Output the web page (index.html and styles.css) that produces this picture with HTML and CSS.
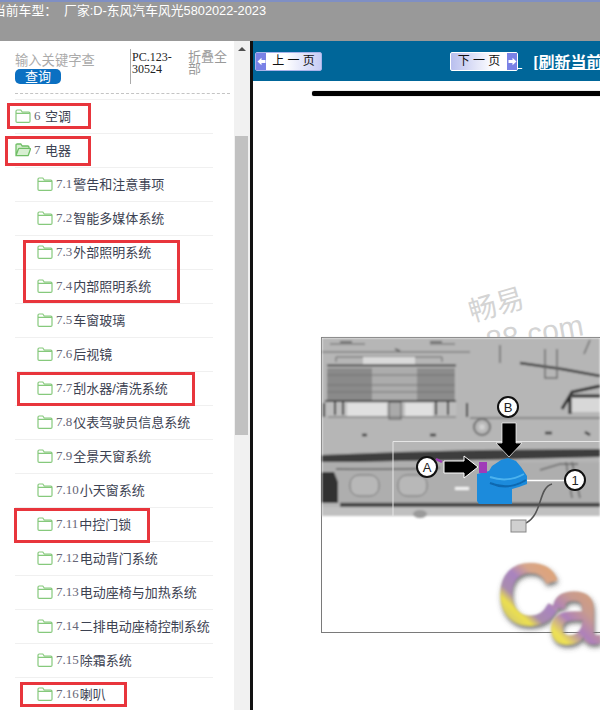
FILE: index.html
```html
<!DOCTYPE html>
<html lang="zh-CN">
<head>
    <meta charset="UTF-8">
    <title>维修手册</title>
    <link rel="stylesheet" href="styles.css">
</head>
<body>
    <svg class="defs">
        <symbol id="folder" viewBox="0 0 16 14">
            <path d="M1 12.2V2.2q0-1.2 1.2-1.2h3.6l1.4 2h6.6q1.2 0 1.2 1.2v8q0 1.2-1.2 1.2H2.2Q1 13.4 1 12.2zM1 4.4h14" fill="none" stroke="#86c97c" stroke-width="1.2"/>
        </symbol>
        <symbol id="folder-open" viewBox="0 0 16 14">
            <path d="M1 12.6V2.2q0-1.2 1.2-1.2h3.6l1.4 2h5.6q1.2 0 1.2 1.2v1.6M1 12.6l2.4-6.6q.2-.6 1-.6h10.4q.9 0 .6.9l-2 5.7q-.2.7-1 .7H1z" fill="#d8efd2" stroke="#6fbe65" stroke-width="1.3"/>
        </symbol>
    </svg>

    <header class="topbar">
        <div class="topbar-text">当前车型：&nbsp;&nbsp;厂家:D-东风汽车风光5802022-2023</div>
    </header>

    <div class="main">
        <aside class="side">
            <div class="side-inner">
                <div class="search">
                    <div class="search-box">
                        <div class="search-hint">输入关键字查</div>
                        <span class="search-btn">查询</span>
                    </div>
                    <div class="search-code">PC.123-30524</div>
                    <div class="search-fold">折叠全部</div>
                </div>
                <ul class="tree">
                    <li class="row"><svg class="ico"><use href="#folder"/></svg><span class="num">6</span>&nbsp;空调</li>
                    <li class="row"><svg class="ico"><use href="#folder-open"/></svg><span class="num">7</span>&nbsp;电器</li>
                    <li class="row sub"><svg class="ico"><use href="#folder"/></svg><span class="num">7.1</span>警告和注意事项</li>
                    <li class="row sub"><svg class="ico"><use href="#folder"/></svg><span class="num">7.2</span>智能多媒体系统</li>
                    <li class="row sub"><svg class="ico"><use href="#folder"/></svg><span class="num">7.3</span>外部照明系统</li>
                    <li class="row sub"><svg class="ico"><use href="#folder"/></svg><span class="num">7.4</span>内部照明系统</li>
                    <li class="row sub"><svg class="ico"><use href="#folder"/></svg><span class="num">7.5</span>车窗玻璃</li>
                    <li class="row sub"><svg class="ico"><use href="#folder"/></svg><span class="num">7.6</span>后视镜</li>
                    <li class="row sub"><svg class="ico"><use href="#folder"/></svg><span class="num">7.7</span>刮水器/清洗系统</li>
                    <li class="row sub"><svg class="ico"><use href="#folder"/></svg><span class="num">7.8</span>仪表驾驶员信息系统</li>
                    <li class="row sub"><svg class="ico"><use href="#folder"/></svg><span class="num">7.9</span>全景天窗系统</li>
                    <li class="row sub"><svg class="ico"><use href="#folder"/></svg><span class="num">7.10</span>小天窗系统</li>
                    <li class="row sub"><svg class="ico"><use href="#folder"/></svg><span class="num">7.11</span>中控门锁</li>
                    <li class="row sub"><svg class="ico"><use href="#folder"/></svg><span class="num">7.12</span>电动背门系统</li>
                    <li class="row sub"><svg class="ico"><use href="#folder"/></svg><span class="num">7.13</span>电动座椅与加热系统</li>
                    <li class="row sub"><svg class="ico"><use href="#folder"/></svg><span class="num">7.14</span>二排电动座椅控制系统</li>
                    <li class="row sub"><svg class="ico"><use href="#folder"/></svg><span class="num">7.15</span>除霜系统</li>
                    <li class="row sub"><svg class="ico"><use href="#folder"/></svg><span class="num">7.16</span>喇叭</li>
                </ul>
                <!-- red marks drawn over the tree -->
                <div class="mark mark-1"></div>
                <div class="mark mark-2"></div>
                <div class="mark mark-3"></div>
                <div class="mark mark-4"></div>
                <div class="mark mark-5"></div>
                <div class="mark mark-6"></div>
            </div>
            <div class="scrollbar">
                <div class="scroll-up"></div>
                <div class="scroll-thumb"></div>
            </div>
        </aside>

        <section class="content">
            <div class="navbar">
                <a class="page-btn page-prev">
                    <span class="cap"><svg class="cap-arrow" viewBox="0 0 9 9"><path d="M0.500 4.500L4.500 0.800V3H8.500V6H4.500V8.200z"/></svg></span>
                    <span class="page-label">上 一 页</span>
                </a>
                <a class="page-btn page-next">
                    <span class="page-label">下 一 页</span>
                    <span class="cap"><svg class="cap-arrow" viewBox="0 0 9 9"><path d="M8.500 4.500L4.500 0.800V3H0.500V6H4.500V8.200z"/></svg></span>
                </a>
                <a class="link-gap">&nbsp;</a>
                <a class="refresh">[刷新当前页面]</a>
            </div>
            <div class="rule"></div>
            <!-- viewBox uses page coordinates -->
            <svg class="figure" viewBox="253 100 347 610">
                <defs>
                    <filter id="soft" x="-5%" y="-5%" width="110%" height="110%"><feGaussianBlur stdDeviation="0.8"/></filter>
                    <filter id="slight"><feGaussianBlur stdDeviation="0.6"/></filter>
                    <filter id="logo-blur" x="-20%" y="-20%" width="150%" height="150%">
                        <feGaussianBlur stdDeviation="1.2" result="b"/>
                        <feDropShadow in="b" dx="1" dy="3" stdDeviation="2.5" flood-color="#444" flood-opacity="0.8"/>
                    </filter>
                    <linearGradient id="logo-c" x1="0.8" y1="0" x2="0.2" y2="1">
                        <stop offset="0" stop-color="#e7a468"/>
                        <stop offset="0.3" stop-color="#d7a58a"/>
                        <stop offset="0.45" stop-color="#a983bf"/>
                        <stop offset="0.62" stop-color="#a98cae"/>
                        <stop offset="0.72" stop-color="#ece04f"/>
                        <stop offset="0.88" stop-color="#cfc572"/>
                        <stop offset="1" stop-color="#a8a07a"/>
                    </linearGradient>
                    <linearGradient id="logo-a" x1="0.7" y1="0" x2="0.2" y2="1">
                        <stop offset="0" stop-color="#dfa36a"/>
                        <stop offset="0.4" stop-color="#c79a90"/>
                        <stop offset="0.6" stop-color="#ad80bb"/>
                        <stop offset="0.8" stop-color="#eee255"/>
                        <stop offset="1" stop-color="#cfc068"/>
                    </linearGradient>
                </defs>

                <g class="wm">
                    <text x="472" y="322" font-size="28" transform="rotate(-16 472 322)">畅易</text>
                    <text x="488" y="352" font-size="30" transform="rotate(-10 488 352)">88.com</text>
                </g>

                <rect x="321.500" y="337.500" width="290" height="295" fill="#fff" stroke="#7a7a7a"/>

                <g filter="url(#soft)">
                    <rect x="322" y="338" width="278" height="178" fill="#b6b6b6"/>
                    <!-- top strip -->
                    <path d="M330 344h35M430 344h25M322 352H470" stroke="#8c8c8c" stroke-width="2" fill="none"/>
                    <path d="M340 342h12M430 342h12M395 349l5 2" stroke="#555" stroke-width="1.500" fill="none"/>
                    <path d="M520 363Q560 368 600 376" stroke="#3c3c3c" stroke-width="2.500" fill="none"/>
                    <path d="M500 345v18M545 349v29h12v-29M590 340l-6 14" stroke="#6c6c6c" stroke-width="1.500" fill="none"/>
                    <!-- radiator block -->
                    <path d="M336 362v-5h106v5" fill="none" stroke="#666"/>
                    <rect x="363" y="357" width="52" height="7" fill="#dadada"/>
                    <rect x="327" y="366" width="129" height="50" fill="#bdbdbd"/>
                    <path d="M327 365.500H456" stroke="#444" stroke-width="2"/>
                    <rect x="327" y="368" width="45" height="33" fill="#8a8a8a"/>
                    <rect x="372" y="368" width="45" height="33" fill="#acacac"/>
                    <rect x="417" y="368" width="38" height="33" fill="#8c8c8c"/>
                    <path d="M327 375H455M327 385H455M327 392H455" stroke="#707070" stroke-width="0.900"/>
                    <path d="M325 401H456" stroke="#444" stroke-width="2"/>
                    <rect x="347" y="403" width="40" height="13" fill="#e0e0e0"/>
                    <rect x="405" y="403" width="28" height="13" fill="#e0e0e0"/>
                    <rect x="389" y="402" width="12" height="17" fill="#aaa" stroke="#555"/>
                    <path d="M335 402v13M343 402v13M436 402v13M448 402v13M324 403v14M467 403v14" stroke="#333" stroke-width="2"/>
                    <path d="M328 417H456" stroke="#707070"/>
                    <!-- mid panel -->
                    <circle cx="482" cy="427" r="8" fill="#b8b8b8" stroke="#6c6c6c" stroke-width="2"/>
                    <circle cx="482" cy="427" r="3" fill="#d0d0d0"/>
                    <path d="M362 435h5M430 435h6M545 433h7M585 432l5 3" stroke="#333" stroke-width="2.500"/>
                    <path d="M570 398h30v14h-30z" fill="#d8d8d8"/>
                    <path d="M562 409L572 392L600 386M570 414V396M600 396H572" stroke="#2c2c2c" stroke-width="3" fill="none"/>
                    <path d="M470 418H600" stroke="#777" stroke-width="1.500"/>
                    <!-- dark rail -->
                    <path d="M322 455L400 452L480 450L600 449V457L480 460L400 461L322 463z" fill="#3e3e3e"/>
                    <!-- lower panel -->
                    <rect x="322" y="462" width="278" height="40" fill="#aeaeae"/>
                    <path d="M336 469Q390 470 440 468" stroke="#5c5c5c" stroke-width="1.500" fill="none"/>
                    <path d="M322 472h12l4 10v21h-16z" fill="#333"/>
                    <rect x="350" y="475" width="29" height="21" rx="9" fill="#b8b8b8" stroke="#747474"/>
                    <rect x="398" y="475" width="29" height="21" rx="9" fill="#b8b8b8" stroke="#747474"/>
                    <rect x="455" y="487" width="14" height="3" fill="#f4f4f4"/>
                    <path d="M540 470l20-6 18 0M566 462l6 36M572 462l8 36" stroke="#666" stroke-width="1.500" fill="none"/>
                    <path d="M340 505H600" stroke="#444" stroke-width="4.500"/>
                    <rect x="322" y="507" width="278" height="9" fill="#c0c0c0"/>
                    <ellipse cx="420" cy="514" rx="7" ry="4" fill="#9a9a9a"/>
                </g>

                <!-- thin frame around the detail -->
                <path d="M393 516V441.500H600" fill="none" stroke="#e6e6e6" stroke-width="1"/>

                <!-- horn -->
                <g filter="url(#slight)">
                    <path d="M552 484C538 488 543 514 526 523" fill="none" stroke="#555" stroke-width="1.600"/>
                    <rect x="511" y="520" width="15" height="12" fill="#d0d0d0" stroke="#888"/>
                    <path d="M477 474l12-3 3-5 9-6 7-2 8 3 5 6 6 9 0 8-8 3-7 2v15h-33l-2-3z" fill="#1a8bdc"/>
                    <path d="M490 483q18 8 36-3" stroke="#0f68b0" stroke-width="2" fill="none"/>
                    <path d="M490 477q18 6 34-3" stroke="#4cb2ee" stroke-width="2" fill="none"/>
                    <rect x="479" y="462" width="8" height="11" fill="#a03ab8"/>
                    <path d="M436 459l6 3" stroke="#a03ab8" stroke-width="2.500"/>
                </g>

                <!-- callouts -->
                <path d="M444 461h20v-5l14 11-14 11v-5h-20z" fill="#000" stroke="#fff" stroke-width="1"/>
                <path d="M502 423h14v20h6l-13 14-13-14h6z" fill="#000" stroke="#fff" stroke-width="0.700"/>
                <path d="M527 480.500H566" stroke="#fff" stroke-width="1.500"/>
                <g class="callout">
                    <circle cx="427" cy="467" r="10"/>
                    <text x="427" y="471.500">A</text>
                    <circle cx="508" cy="407" r="10"/>
                    <text x="508" y="411.500">B</text>
                    <circle cx="575" cy="480" r="10"/>
                    <text x="575" y="484.500">1</text>
                </g>

                <g class="logo" filter="url(#logo-blur)">
                    <text x="498" y="623" font-size="84" fill="url(#logo-c)" stroke="url(#logo-c)" stroke-width="3.500">C</text>
                    <text x="549" y="642" font-size="90" fill="url(#logo-a)" stroke="url(#logo-a)" stroke-width="3">a</text>
                </g>
            </svg>
        </section>
    </div>
</body>
</html>
```

FILE: styles.css
```css
html, body {
    margin: 0;
    padding: 0;
}
body {
    width: 600px;
    height: 710px;
    overflow: hidden;
    display: flex;
    flex-direction: column;
    font-family: "Liberation Sans", "Noto Sans CJK SC", sans-serif;
    background: #fff;
}
.defs {
    display: none;
}

/* top bar */
.topbar {
    height: 39px;
    flex: none;
    background: #999;
    border-top: 2px solid #7f8fc4;
    overflow: hidden;
}
.topbar-text {
    margin-left: -7px;
    line-height: 17px;
    font-size: 12.800px;
    color: #fff;
    white-space: nowrap;
}

.main {
    flex: 1;
    display: flex;
    min-height: 0;
}

/* left tree */
.side {
    width: 250px;
    flex: none;
    display: flex;
    border-right: 3px solid #111;
}
.side-inner {
    position: relative;
    width: 234px;
    flex: none;
    padding-top: 8px;
    box-sizing: border-box;
    overflow: hidden;
}
.search {
    display: flex;
    margin-left: 15px;
    width: 215px;
    height: 44px;
    border-bottom: 1px dashed #c4c4c4;
}
.search-box {
    width: 115px;
    padding-top: 4px;
}
.search-hint {
    font-size: 13.300px;
    line-height: 16px;
    color: #aaa;
    white-space: nowrap;
}
.search-btn {
    display: block;
    width: 46px;
    height: 15px;
    line-height: 15px;
    border-radius: 5px;
    background: #0b70c2;
    color: #fff;
    font-size: 13px;
    text-align: center;
}
.search-code {
    width: 45px;
    height: 33px;
    padding-top: 2px;
    padding-left: 1px;
    border-left: 1px solid #aaa;
    font-family: "Liberation Serif", serif;
    font-size: 12px;
    line-height: 12px;
    color: #222;
}
.search-fold {
    width: 40px;
    margin-left: 11px;
    padding-top: 2px;
    font-size: 13px;
    line-height: 12px;
    color: #999;
}
.tree {
    list-style: none;
    margin: 5px 0 0 15px;
    padding: 0;
    width: 198px;
}
.row {
    display: flex;
    align-items: center;
    box-sizing: border-box;
    height: 34px;
    padding-bottom: 2px;
    border-top: 1px solid #f0f0f0;
    font-size: 13px;
    color: #3c4252;
    white-space: nowrap;
}
.sub {
    padding-left: 22px;
}
.ico {
    width: 16px;
    height: 14px;
    margin-right: 3px;
    flex: none;
}
.num {
    padding-right: 1px;
    font-family: "Liberation Serif", serif;
    font-size: 13px;
    color: #667;
}

/* red marks over the tree */
.mark {
    position: absolute;
    border: 3px solid #e8353c;
    box-sizing: border-box;
}
.mark-1 { left: 7px; top: 62px; width: 84px; height: 26px; }
.mark-2 { left: 5px; top: 95px; width: 86px; height: 30px; }
.mark-3 { left: 23px; top: 199px; width: 157px; height: 63px; }
.mark-4 { left: 17px; top: 331px; width: 178px; height: 34px; }
.mark-5 { left: 14px; top: 467px; width: 136px; height: 35px; }
.mark-6 { left: 20px; top: 641px; width: 107px; height: 25px; }

/* scrollbar */
.scrollbar {
    position: relative;
    width: 16px;
    flex: none;
    background: #f1f1f1;
}
.scroll-up {
    position: absolute;
    left: 4px;
    top: 6px;
    width: 0;
    height: 0;
    border-left: 4px solid transparent;
    border-right: 4px solid transparent;
    border-bottom: 4px solid #505050;
}
.scroll-thumb {
    position: absolute;
    left: 1px;
    top: 95px;
    width: 13px;
    height: 299px;
    background: #c1c1c1;
}

/* right page */
.content {
    flex: 1;
    min-width: 0;
    overflow: hidden;
}
.navbar {
    display: flex;
    align-items: center;
    height: 40px;
    background: #006699;
    padding-left: 2px;
}
.page-btn {
    display: flex;
    align-items: stretch;
    flex: none;
    height: 19px;
    box-sizing: border-box;
    border-radius: 2px;
    font-size: 12px;
    color: #111;
    white-space: nowrap;
}
.page-prev {
    width: 67px;
    background: linear-gradient(90deg, #fff 45%, #c6cbf5);
    border: 1px solid #a9b4ea;
}
.page-next {
    width: 68px;
    margin-left: 128px;
    background: linear-gradient(90deg, #b9bfee, #fff 65%);
    border: 1px solid #fff;
}
.cap {
    display: flex;
    align-items: center;
    justify-content: center;
    width: 10px;
    flex: none;
    background: #7a82e6;
}
.cap-arrow {
    width: 9px;
    height: 9px;
    fill: #fff;
}
.page-label {
    flex: 1;
    text-align: center;
    line-height: 17px;
}
.link-gap {
    flex: none;
    font-size: 15px;
    color: #fff;
    text-decoration: underline;
}
.refresh {
    flex: none;
    margin-left: 11px;
    font-family: "Liberation Serif", "Noto Sans CJK SC", serif;
    font-size: 16px;
    font-weight: bold;
    color: #fff;
    text-decoration: underline;
    white-space: nowrap;
}
.rule {
    height: 5px;
    margin: 10px 0 0 59px;
    background: #000;
    border-radius: 2px 0 0 2px;
    box-shadow: 0 0 1px #666;
}
.figure {
    display: block;
    width: 347px;
    height: 610px;
    margin-top: 4px;
}
.wm text {
    font-family: "Liberation Sans", "Noto Sans CJK SC", sans-serif;
    fill: #d4d4d4;
}
.callout circle {
    fill: #fff;
    stroke: #111;
    stroke-width: 2;
}
.callout text {
    font-family: "Liberation Sans", sans-serif;
    font-size: 13px;
    fill: #222;
    text-anchor: middle;
}
.logo text {
    font-family: "Liberation Sans", sans-serif;
}
```
